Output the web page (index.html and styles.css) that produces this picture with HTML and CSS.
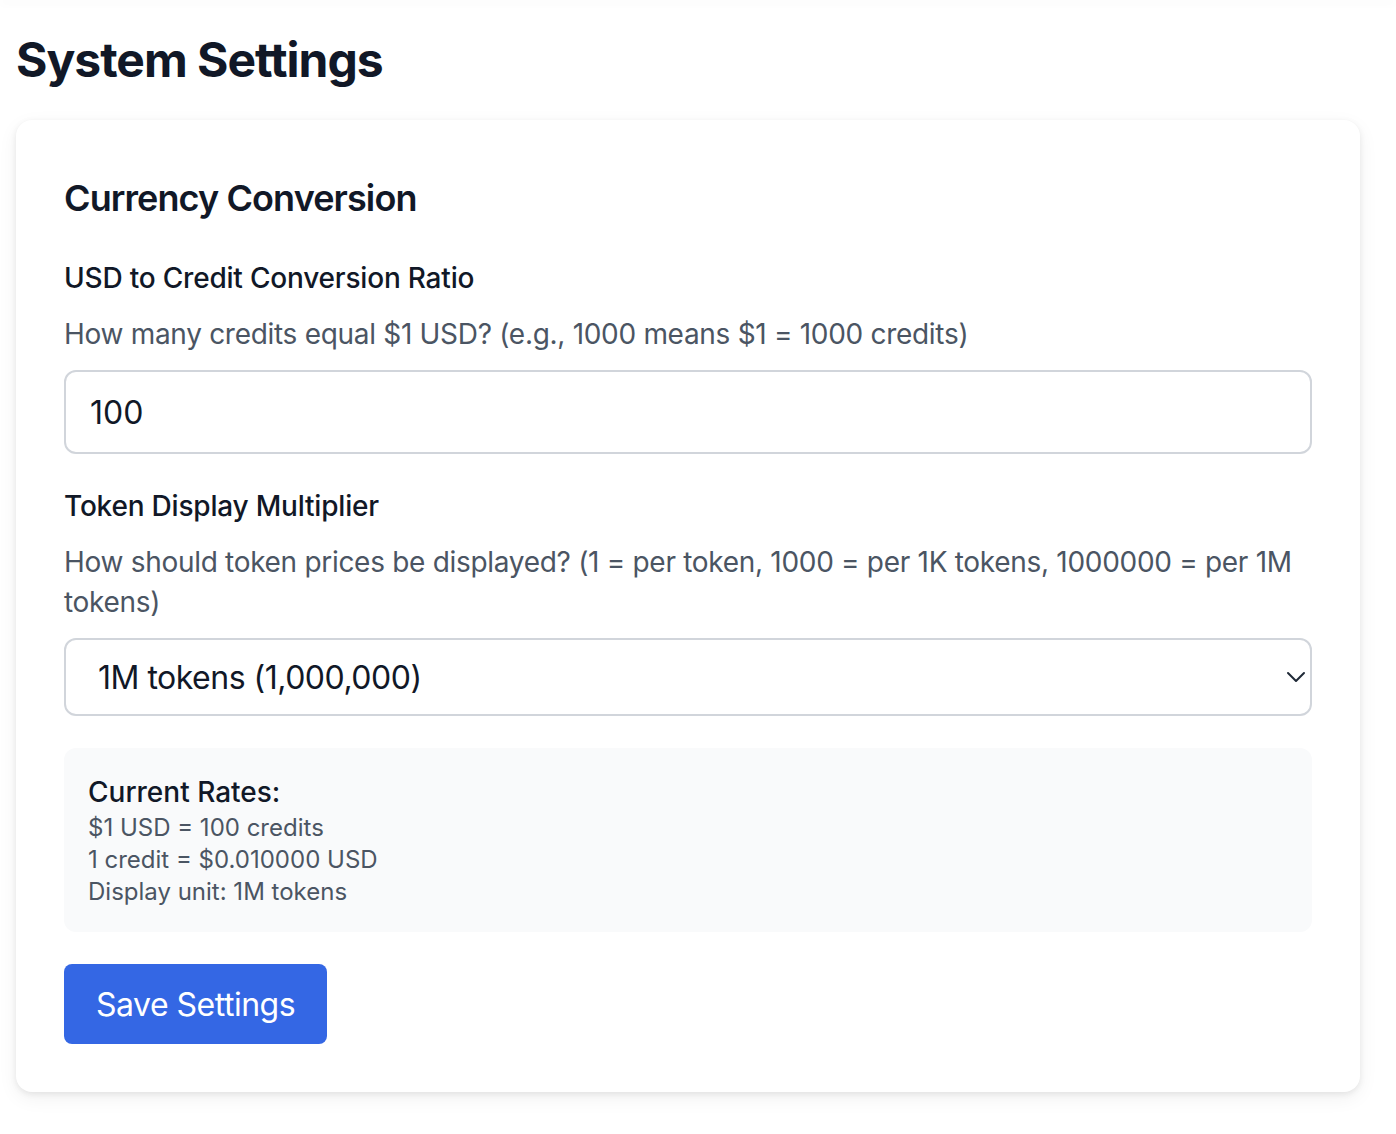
FILE: index.html
```html
<!DOCTYPE html>
<html lang="en">
<head>
<meta charset="utf-8">
<title>System Settings</title>
<link rel="stylesheet" href="styles.css">
</head>
<body>
<div class="topbar"></div>
<main class="page">
  <h1 class="page-title">System Settings</h1>
  <section class="card">
    <h2 class="card-title">Currency Conversion</h2>
    <div class="field">
      <label class="label" for="ratio">USD to Credit Conversion Ratio</label>
      <p class="help">How many credits equal $1 USD? (e.g., 1000 means $1 = 1000 credits)</p>
      <input id="ratio" class="input" type="text" value="100">
    </div>
    <div class="field">
      <label class="label" for="mult">Token Display Multiplier</label>
      <p class="help">How should token prices be displayed? (1 = per token, 1000 = per 1K tokens, 1000000 = per 1M tokens)</p>
      <div class="select-wrap">
        <div id="mult" class="select">1M tokens (1,000,000)</div>
        <svg class="chevron" width="20" height="12" viewBox="0 0 20 12"><path d="M2 2 L10 10 L18 2" fill="none" stroke="#1f2937" stroke-width="2" stroke-linecap="round" stroke-linejoin="round"/></svg>
      </div>
    </div>
    <div class="rates">
      <div class="rates-title">Current Rates:</div>
      <div class="rate">$1 USD = 100 credits</div>
      <div class="rate">1 credit = $0.010000 USD</div>
      <div class="rate">Display unit: 1M tokens</div>
    </div>
    <div class="actions">
      <button class="btn" type="button">Save Settings</button>
    </div>
  </section>
</main>
</body>
</html>
```

FILE: styles.css
```css
* { box-sizing: border-box; }
html, body { margin: 0; padding: 0; background: #ffffff; }
body {
  font-family: "Inter", "Noto Sans", "Liberation Sans", sans-serif;
  color: #111827;
}
.topbar {
  height: 1px;
  margin-top: -1px;
  box-shadow: 0 2px 10px rgba(0,0,0,0.12);
}
.page {
  padding: 28px 36px 40px 16px;
}
.page-title {
  margin: 0 0 28px 0;
  font-size: 48px;
  line-height: 64px;
  font-weight: 700;
  color: #111827;
  letter-spacing: -1px;
}
.card {
  background: #fff;
  border-radius: 16px;
  box-shadow: 0 2px 6px rgba(0,0,0,0.08), 0 6px 20px rgba(0,0,0,0.06);
  padding: 50px 48px 48px 48px;
}
.card-title {
  margin: 0 0 32px 0;
  font-size: 36px;
  line-height: 56px;
  font-weight: 600;
  color: #111827;
  letter-spacing: -0.9px;
}
.field { margin-bottom: 32px; }
.label {
  display: block;
  font-size: 28px;
  line-height: 40px;
  font-weight: 500;
  color: #111827;
  margin-bottom: 16px;
  letter-spacing: -0.2px;
}
.help {
  margin: 0 0 16px 0;
  font-size: 28px;
  line-height: 40px;
  color: #4b5563;
  letter-spacing: -0.3px;
}
.input {
  display: block;
  width: 100%;
  height: 84px;
  border: 2px solid #d1d5db;
  border-radius: 12px;
  padding: 0 24px;
  font-family: inherit;
  font-size: 32px;
  color: #111827;
  background: #fff;
  outline: none;
}
.select-wrap {
  position: relative;
}
.select {
  height: 78px;
  border: 2px solid #d1d5db;
  border-radius: 12px;
  padding: 0 32px;
  display: flex;
  align-items: center;
  font-size: 32px;
  color: #111827;
  background: #fff;
  letter-spacing: -0.5px;
}
.chevron {
  position: absolute;
  top: 33px;
  right: 6px;
}
.rates {
  background: #f9fafb;
  border-radius: 12px;
  padding: 24px;
  margin-bottom: 32px;
}
.rates-title {
  font-size: 28px;
  line-height: 40px;
  font-weight: 500;
  color: #111827;
}
.rate {
  font-size: 24px;
  line-height: 32px;
  color: #4b5563;
}
.actions { display: flex; }
.btn {
  height: 80px;
  padding: 0 32px;
  background: #3467e4;
  color: #fff;
  border: none;
  border-radius: 8px;
  font-family: inherit;
  font-size: 32px;
  font-weight: 400;
  letter-spacing: -0.5px;
}
```
